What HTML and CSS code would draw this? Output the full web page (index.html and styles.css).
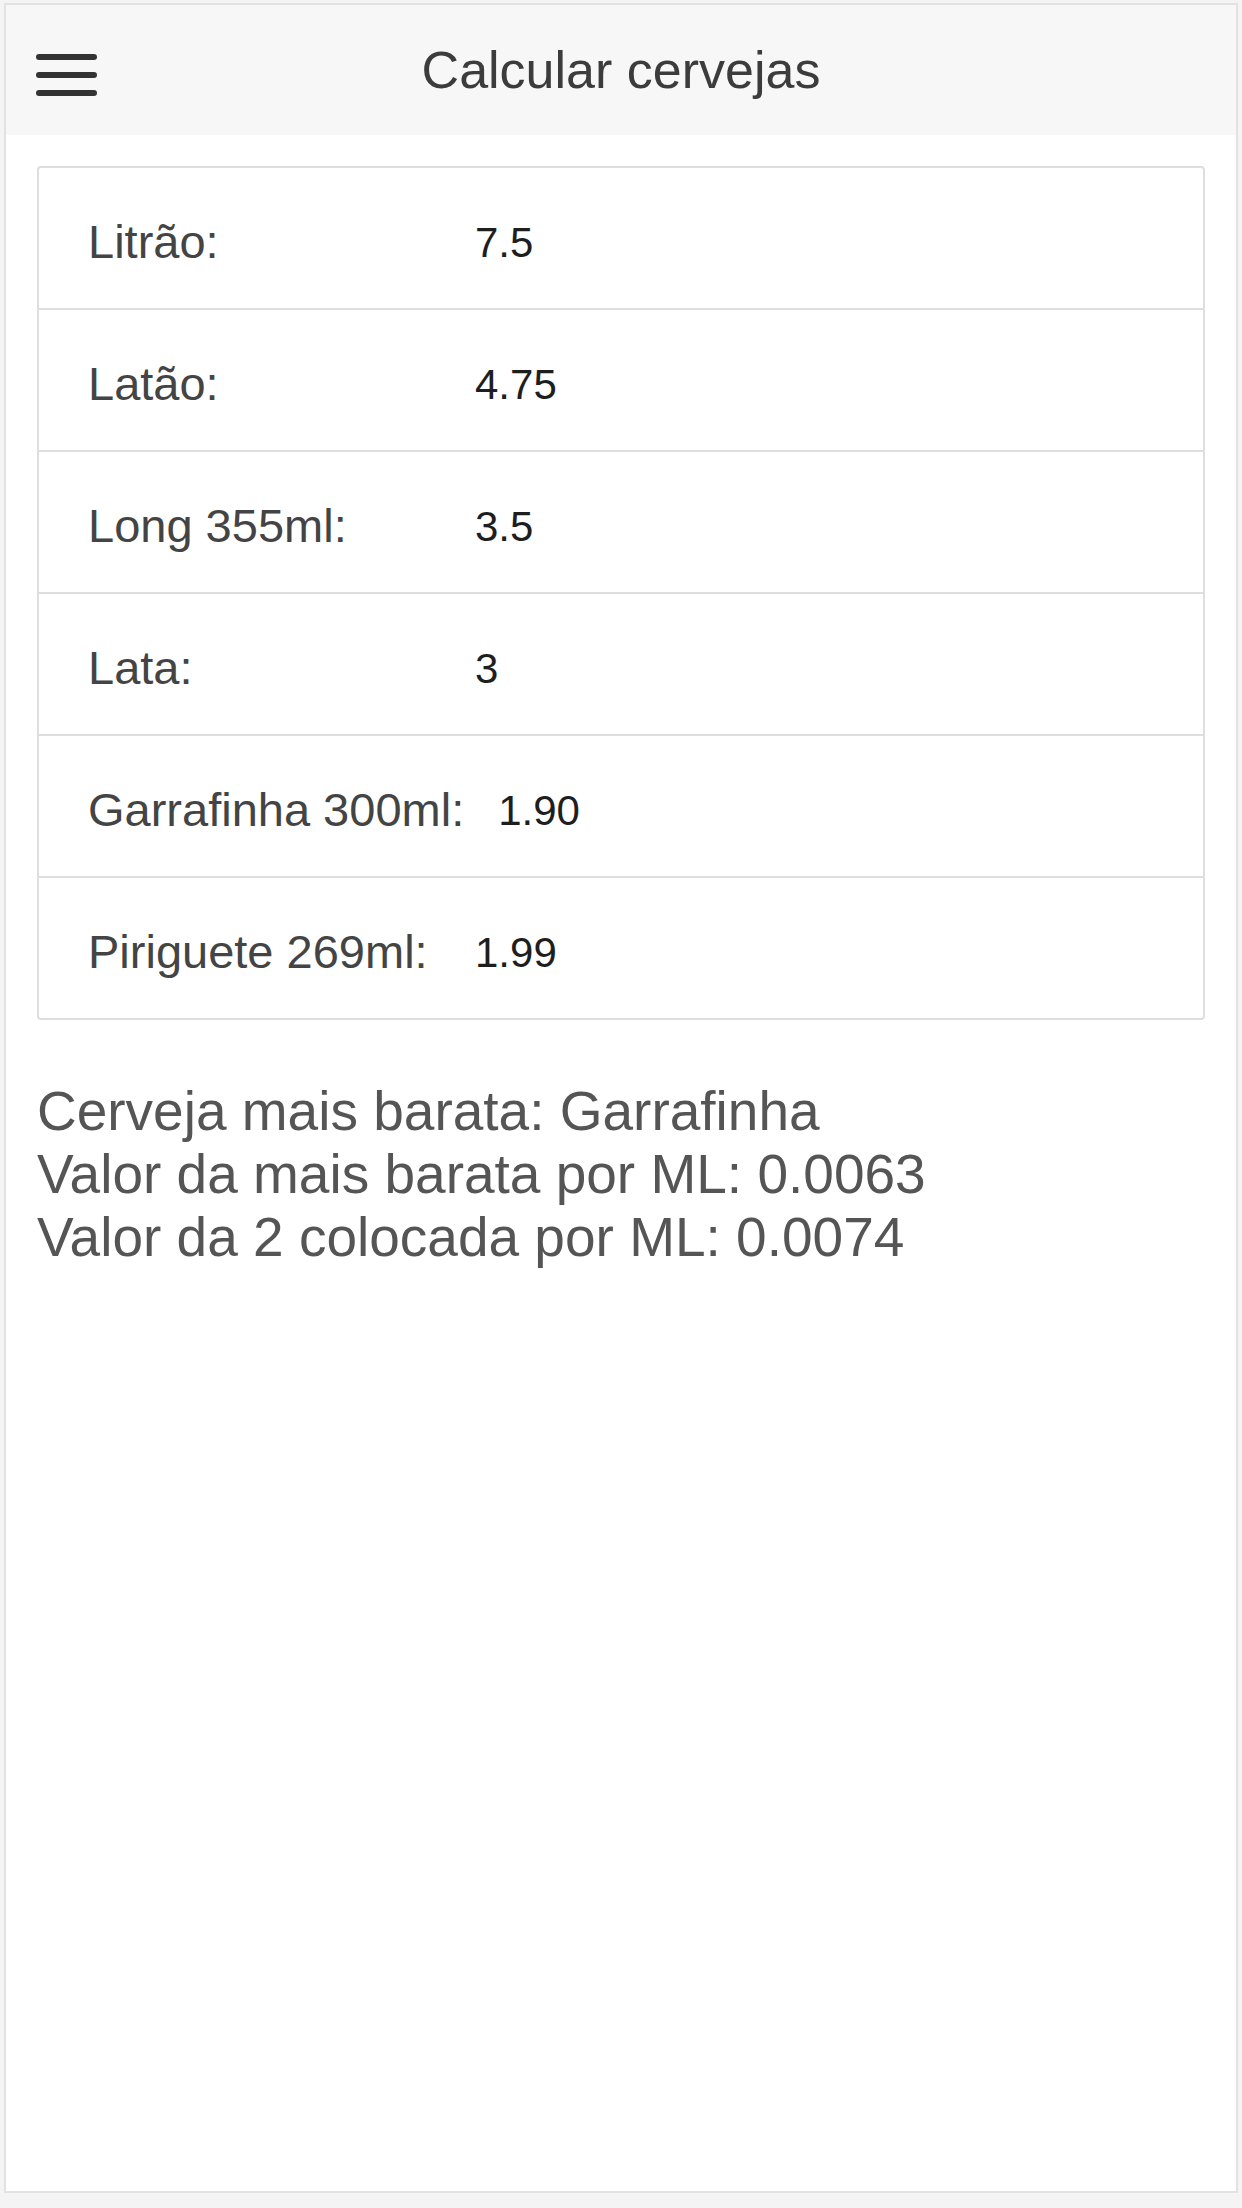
FILE: index.html
```html
<!DOCTYPE html>
<html lang="pt">
<head>
<meta charset="utf-8">
<title>Calcular cervejas</title>
<link rel="stylesheet" href="styles.css">
</head>
<body>
<div class="device">
  <header class="bar">
    <button class="menu-btn" aria-label="Menu">
      <svg width="61" height="46" viewBox="0 0 61 46">
        <rect x="0" y="2" width="61" height="6" rx="3" fill="#333"/>
        <rect x="0" y="20" width="61" height="6" rx="3" fill="#333"/>
        <rect x="0" y="38" width="61" height="6" rx="3" fill="#333"/>
      </svg>
    </button>
    <h1 class="title">Calcular cervejas</h1>
  </header>
  <main class="content">
    <div class="card">
      <div class="row"><span class="label">Litrão:</span><span class="value">7.5</span></div>
      <div class="row"><span class="label">Latão:</span><span class="value">4.75</span></div>
      <div class="row"><span class="label">Long 355ml:</span><span class="value">3.5</span></div>
      <div class="row"><span class="label">Lata:</span><span class="value">3</span></div>
      <div class="row"><span class="label">Garrafinha 300ml:</span><span class="value">1.90</span></div>
      <div class="row"><span class="label">Piriguete 269ml:</span><span class="value">1.99</span></div>
    </div>
    <div class="results">
      <p>Cerveja mais barata: Garrafinha</p>
      <p>Valor da mais barata por ML: 0.0063</p>
      <p>Valor da 2 colocada por ML: 0.0074</p>
    </div>
  </main>
</div>
</body>
</html>
```
FILE: styles.css
```css
html, body {
  margin: 0;
  padding: 0;
  background: #f4f4f4;
  font-family: "Liberation Sans", Arial, Helvetica, sans-serif;
}

.device {
  box-sizing: border-box;
  margin: 3px 4px 0 4px;
  height: 2190px;
  border: 2px solid #e2e2e2;
  background: #ffffff;
  display: flex;
  flex-direction: column;
}

.bar {
  position: relative;
  height: 130px;
  background: #f7f7f7;
  display: flex;
  align-items: center;
  justify-content: center;
}

.menu-btn {
  position: absolute;
  left: 30px;
  top: 47px;
  padding: 0;
  margin: 0;
  border: 0;
  background: transparent;
  line-height: 0;
}

.title {
  margin: 0;
  font-size: 52px;
  font-weight: normal;
  color: #3c3c3c;
}

.content {
  padding: 31px 31px 0 31px;
}

.card {
  border: 2px solid #dedede;
  border-radius: 4px;
  background: #fff;
}

.row {
  box-sizing: content-box;
  height: 134px;
  padding: 6px 20px 0 49px;
  display: flex;
  align-items: center;
  border-top: 2px solid #dedede;
}

.row:first-child {
  border-top: 0;
}

.label {
  box-sizing: border-box;
  min-width: 387px;
  padding-right: 34px;
  font-size: 47px;
  color: #444;
  white-space: nowrap;
}

.value {
  padding-top: 4px;
  font-size: 42px;
  color: #1e1e1e;
}

.results {
  margin-top: 60px;
  font-size: 55px;
  line-height: 63px;
  color: #555;
}

.results p {
  margin: 0;
}
```
